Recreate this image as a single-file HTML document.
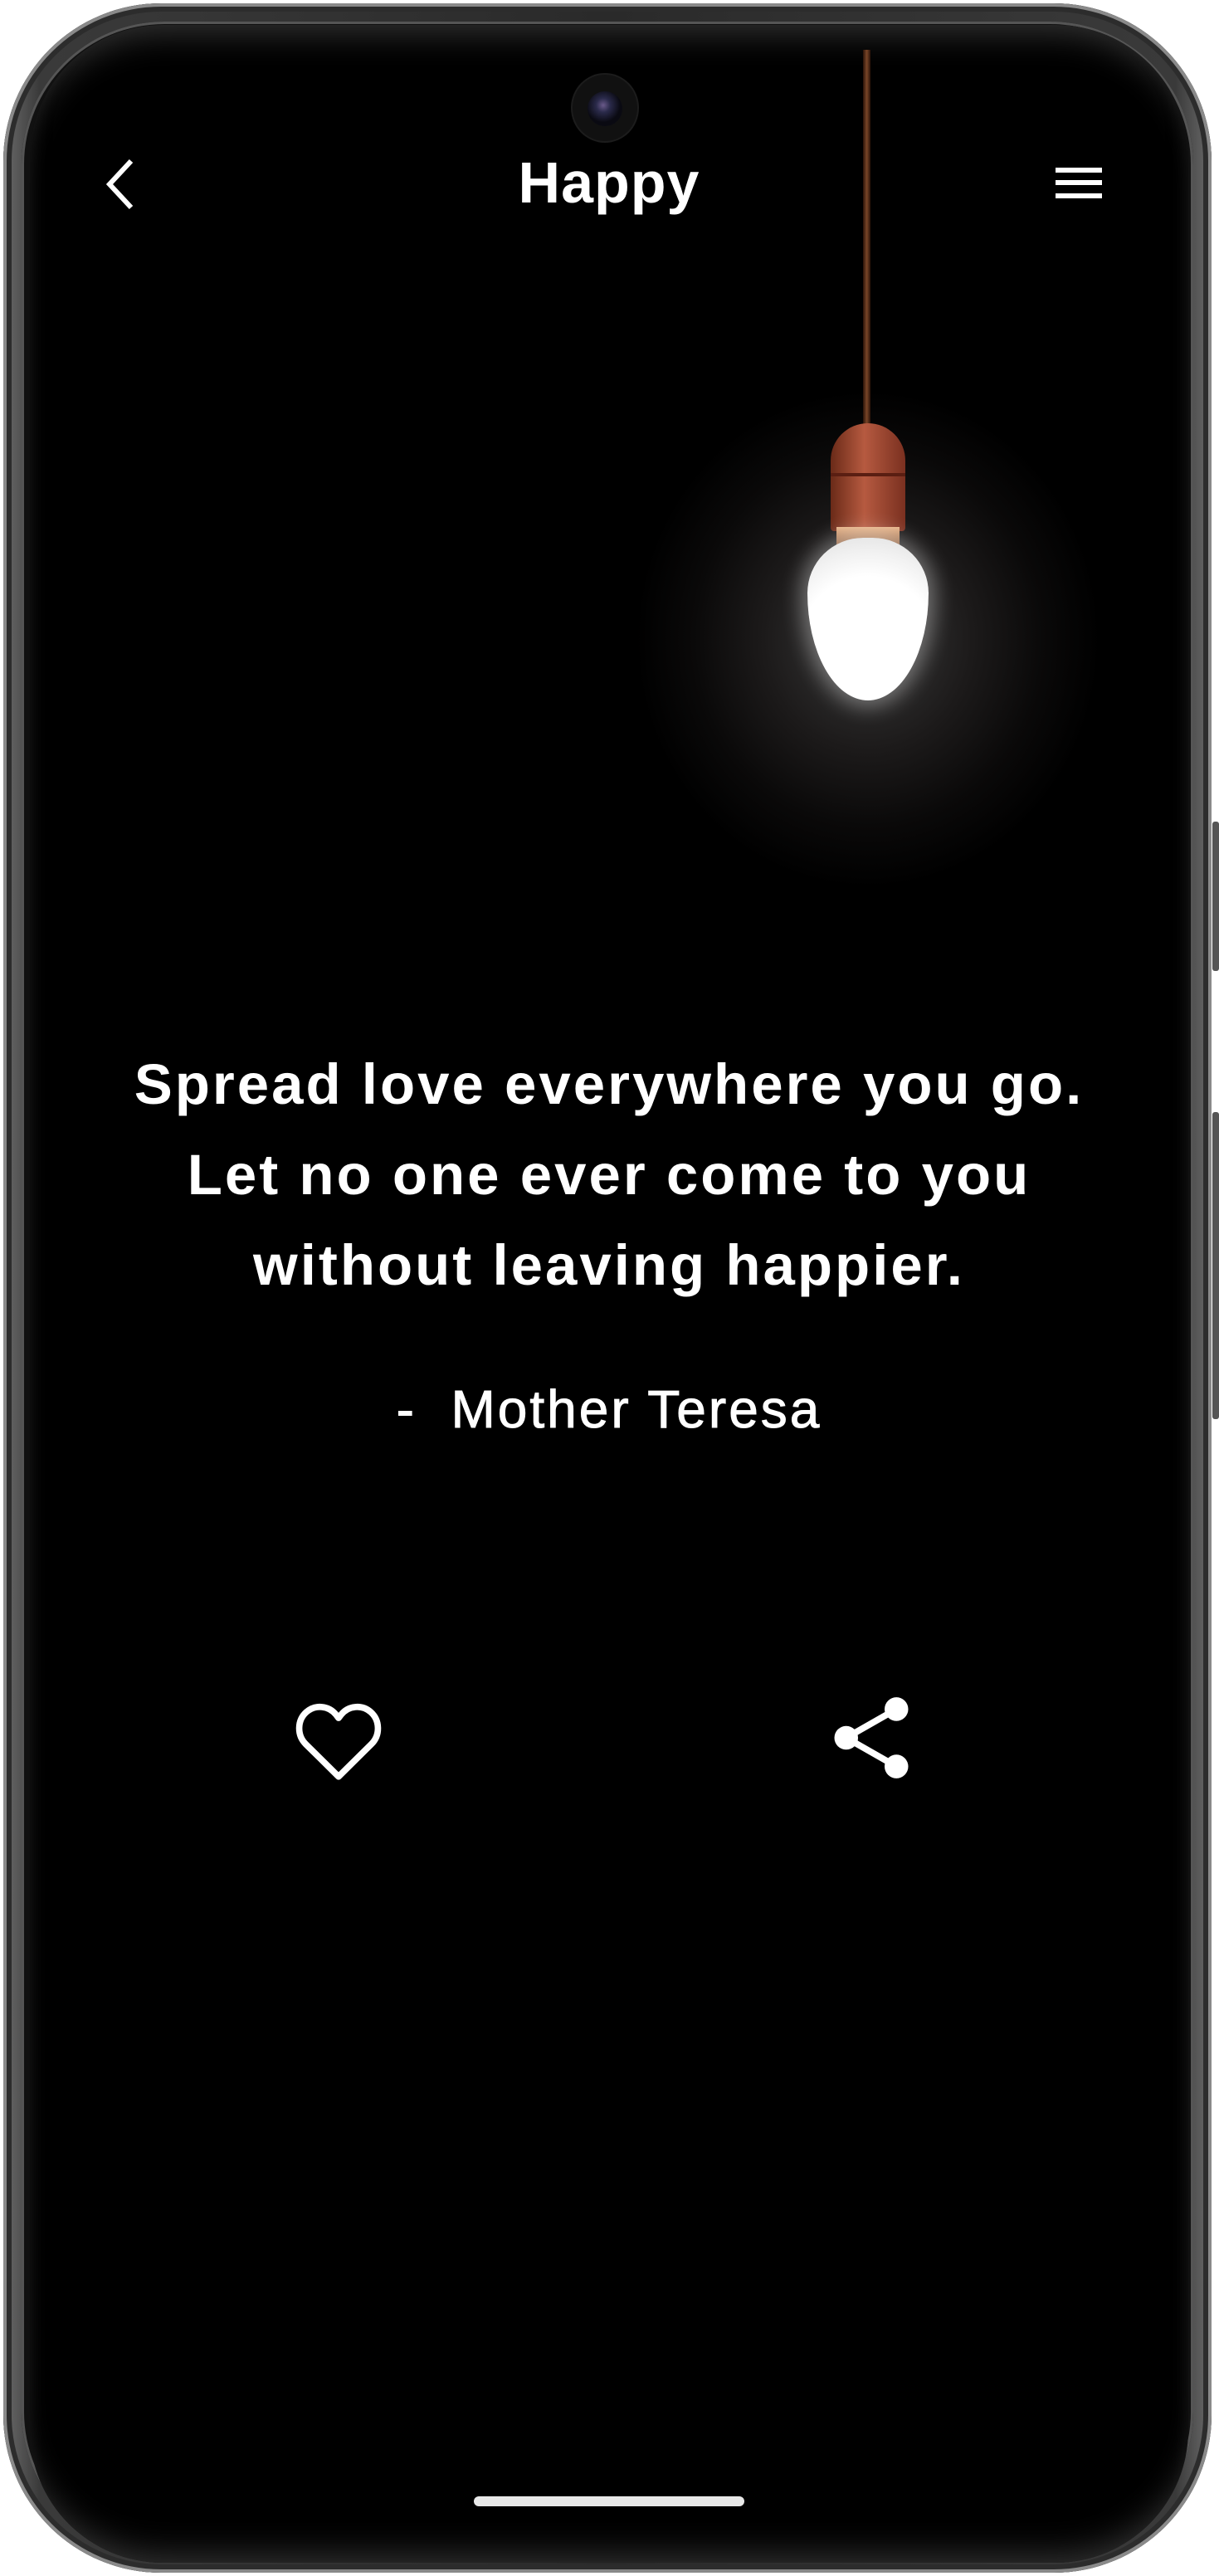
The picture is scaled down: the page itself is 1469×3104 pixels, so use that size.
<!DOCTYPE html>
<html><head><meta charset="utf-8"><style>
html,body{margin:0;padding:0;background:#fff;}
body{width:1469px;height:3104px;position:relative;overflow:hidden;font-family:"Liberation Sans",sans-serif;}
.btn{position:absolute;right:0;width:8px;background:#555;border-radius:3px;}
.phone{position:absolute;left:4px;top:4px;width:1456px;height:3096px;border-radius:190px;background:linear-gradient(90deg,#6a6a6a,#3a3a3a 3%,#2a2a2a 50%,#3a3a3a 97%,#6a6a6a);box-shadow:inset 0 0 0 4px #8a8a8a,inset 0 0 0 10px #2c2c2c;}
.bezel{position:absolute;left:22px;top:22px;right:22px;bottom:22px;border-radius:172px;background:#111;box-shadow:inset 0 0 0 3px #555;}
.screen{position:absolute;left:36px;top:30px;width:1396px;height:3058px;border-radius:160px;background:#000;overflow:hidden;box-shadow:inset 0 -30px 40px -20px #333,inset 0 30px 40px -20px #333;}
.t{position:absolute;left:0;width:100%;text-align:center;color:#fff;}
</style></head><body>
<div class="btn" style="top:990px;height:180px"></div>
<div class="btn" style="top:1340px;height:370px"></div>
<div class="phone"><div class="bezel"></div></div>
<div class="screen">
  <div style="position:absolute;left:730px;top:440px;width:560px;height:600px;border-radius:50%;background:radial-gradient(closest-side,#3a3a3a 0%,#1c1a1a 45%,#0a0909 75%,rgba(0,0,0,0) 100%);"></div>
  <div style="position:absolute;left:1004px;top:30px;width:9px;height:470px;background:linear-gradient(90deg,#2a1208,#7a4628,#2a1208);"></div>
  <div style="position:absolute;left:965px;top:480px;width:90px;height:130px;border-radius:45px 45px 4px 4px;background:linear-gradient(90deg,#6a2a18,#b65a40 45%,#7a3020);"></div>
  <div style="position:absolute;left:965px;top:540px;width:90px;height:4px;background:#5a1e12;"></div>
  <div style="position:absolute;left:972px;top:605px;width:76px;height:22px;background:linear-gradient(#e8b58a,#8a5a3a);"></div>
  <div style="position:absolute;left:937px;top:618px;width:146px;height:196px;border-radius:46% 46% 50% 50%/34% 34% 66% 66%;background:radial-gradient(circle at 50% 65%,#fff 55%,#f1f1f1 75%,#ddd 100%);box-shadow:0 0 24px 8px rgba(255,255,255,.35);"></div>
  <div style="position:absolute;left:654px;top:60px;width:78px;height:80px;border-radius:50%;background:#111;box-shadow:0 0 0 2px #1c1c1c;"></div>
  <div style="position:absolute;left:672px;top:80px;width:42px;height:42px;border-radius:50%;background:radial-gradient(circle at 45% 40%,#6a5a8a 0,#2a2a4a 25%,#0a0a12 60%);"></div>
  <svg style="position:absolute;left:86px;top:160px" width="44" height="64" viewBox="0 0 44 64"><path d="M36 4 L10 32 L36 60" fill="none" stroke="#fff" stroke-width="6"/></svg>
  <div class="t" style="top:150px;font-size:70px;font-weight:bold;letter-spacing:1px;line-height:80px;">Happy</div>
  <div style="position:absolute;left:1236px;top:172px;width:56px;height:6px;background:#fff"></div>
  <div style="position:absolute;left:1236px;top:187px;width:56px;height:6px;background:#fff"></div>
  <div style="position:absolute;left:1236px;top:203px;width:56px;height:6px;background:#fff"></div>
  <div class="t" style="top:1222px;font-size:69px;font-weight:bold;letter-spacing:3px;line-height:109px;">Spread love everywhere you go.<br>Let no one ever come to you<br>without leaving happier.</div>
  <div class="t" style="top:1633px;font-size:64px;letter-spacing:3px;line-height:70px;-webkit-text-stroke:1px #fff;">-&nbsp; Mother Teresa</div>
  <svg style="position:absolute;left:318px;top:2018px" width="108" height="100" viewBox="0 0 24 22"><path d="M12 20.5 L3.2 11.8 C0.8 9.4 0.9 5.4 3.4 3.2 C5.8 1.1 9.4 1.5 11.3 3.9 L12 4.8 L12.7 3.9 C14.6 1.5 18.2 1.1 20.6 3.2 C23.1 5.4 23.2 9.4 20.8 11.8 Z" fill="none" stroke="#fff" stroke-width="1.7" stroke-linejoin="round"/></svg>
  <svg style="position:absolute;left:962px;top:2010px" width="104" height="108" viewBox="0 0 24 25"><circle cx="19" cy="4.5" r="3.3" fill="#fff"/><circle cx="5" cy="12.5" r="3.3" fill="#fff"/><circle cx="19" cy="20.5" r="3.3" fill="#fff"/><path d="M19 4.5 L5 12.5 L19 20.5" fill="none" stroke="#fff" stroke-width="1.8"/></svg>
  <div style="position:absolute;left:535px;top:2978px;width:326px;height:12px;border-radius:6px;background:#e8e8e8;"></div>
</div>
</body></html>
